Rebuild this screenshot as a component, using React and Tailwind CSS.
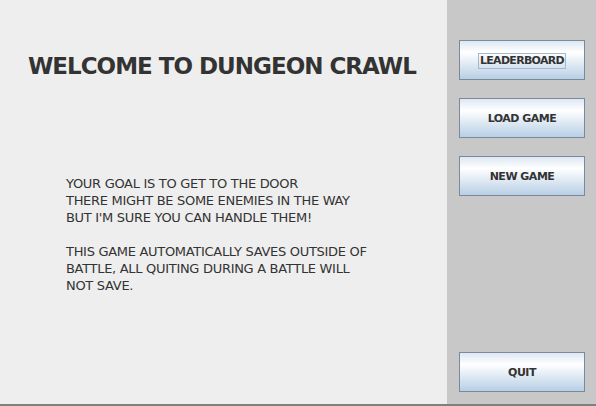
import React from "react";

const font = { fontFamily: '"DejaVu Sans", Tahoma, sans-serif' };

function Btn({ children, focus }) {
  return (
    <button
      className="w-[126px] h-[40px] flex items-center justify-center border border-[#7a8a99] bg-linear-to-b from-[#dde8f3] via-[#ffffff] via-30% to-[#b8cfe5] text-[11px] font-bold text-[#333333] tracking-[-0.5px] pt-[2px]"
      style={font}
    >
      {focus ? (
        <span className="border border-[#a3b8cc] px-[1px] leading-[14px] tracking-[-0.7px]">{children}</span>
      ) : (
        children
      )}
    </button>
  );
}

export default function App() {
  return (
    <div
      className="w-[596px] h-[406px] flex bg-[#eeeeee] border-b-2 border-[#808080]"
      style={font}
    >
      <div className="w-[447px] flex flex-col pt-[52px] pl-[28px]">
        <h1 className="text-[23px] font-bold leading-[28px] text-[#333333] tracking-[-1px] whitespace-nowrap">
          WELCOME TO DUNGEON CRAWL
        </h1>
        <div className="mt-[95px] pl-[38px] text-[13px] leading-[17px] text-[#333333] tracking-[-0.3px]">
          <p>YOUR GOAL IS TO GET TO THE DOOR</p>
          <p>THERE MIGHT BE SOME ENEMIES IN THE WAY</p>
          <p>BUT I'M SURE YOU CAN HANDLE THEM!</p>
          <p>&nbsp;</p>
          <p>THIS GAME AUTOMATICALLY SAVES OUTSIDE OF</p>
          <p>BATTLE, ALL QUITING DURING A BATTLE WILL</p>
          <p>NOT SAVE.</p>
        </div>
      </div>
      <div className="w-[149px] bg-[#c8c8c8] flex flex-col gap-[18px] pt-[40px] pl-[12px] pb-[12px]">
        <Btn focus>LEADERBOARD</Btn>
        <Btn>LOAD GAME</Btn>
        <Btn>NEW GAME</Btn>
        <div className="mt-auto">
          <Btn>QUIT</Btn>
        </div>
      </div>
    </div>
  );
}
